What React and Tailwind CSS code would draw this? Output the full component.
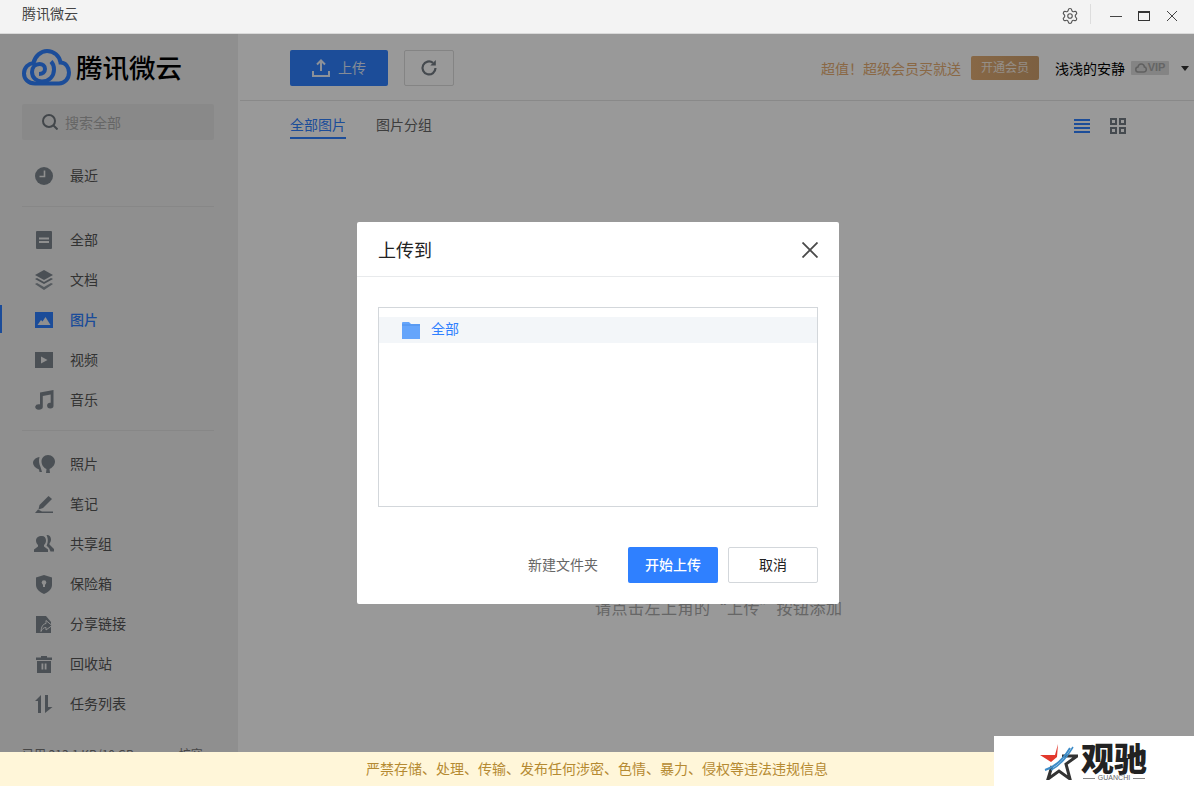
import { Settings } from "lucide-react";

const FONT = "font-['Noto_Sans_CJK_SC','Noto_Sans',sans-serif]";

const icons = {
  clock: <svg width="18" height="18" viewBox="0 0 18 18"><circle cx="9" cy="9" r="9" fill="currentColor"/><path d="M9.500 3.500v6H4.500" stroke="#eee" strokeWidth="1.600" fill="none"/></svg>,
  doc: <svg width="16" height="18" viewBox="0 0 16 18"><rect width="16" height="18" rx="1" fill="currentColor"/><path d="M3 6.500h10v2H3zM3 10h10v2H3z" fill="#eee"/></svg>,
  layers: <svg width="18" height="20" viewBox="0 0 18 20"><path d="M9 0l9 5-9 5-9-5z" fill="currentColor"/><path d="M0 9l2-1 7 4 7-4 2 1-9 5z" fill="currentColor"/><path d="M0 14l2-1 7 4 7-4 2 1-9 6z" fill="currentColor" opacity=".85"/></svg>,
  image: <svg width="18" height="16" viewBox="0 0 18 16"><rect width="18" height="16" fill="currentColor"/><path d="M2.500 13l3.500-5 1.500 1.500L10.500 5l5 8z" fill="#eee"/></svg>,
  video: <svg width="18" height="16" viewBox="0 0 18 16"><rect width="18" height="16" fill="currentColor"/><path d="M6 4.500L12.500 8 6 11.500z" fill="#eee"/></svg>,
  music: <svg width="19" height="20" viewBox="0 0 19 20"><path d="M5 2.500L18.500 0v15.500a3.200 2.800 0 1 1-2.800-2.700V4.500L7.800 6v11a3.800 2.800 0 1 1-2.800-2.700z" fill="currentColor"/></svg>,
  balloon: <svg width="22" height="18" viewBox="0 0 22 18"><path d="M15 0c4 0 7 3 7 6.500 0 3.500-3 6.500-5.500 7.500l.5 4h-4l.5-4C11 13 8.500 10 8.500 6.500 8.500 3 11 0 15 0z" fill="currentColor"/><path d="M6.500 2C3 2.500 0 5 0 8c0 2.500 2.500 5 6 6.500l.5 2.500H9l-1.500-5C6 9 5.500 5 6.500 2z" fill="currentColor"/></svg>,
  pen: <svg width="18" height="17" viewBox="0 0 18 17"><path d="M13.500 0l3.500 3L8 12 3.500 13.500 4.500 9z" fill="currentColor"/><path d="M3 13.500l-3 3.500h18v-1.500H7z" fill="currentColor"/></svg>,
  users: <svg width="20" height="18" viewBox="0 0 20 18"><path d="M8 1c2.500 0 4 2 4 4.500 0 2-1 3.500-2 4.500v1.500l4 3v2.500H0v-2.500l4-3V10C3 9 2 7.500 2 5.500 2 3 4 1 8 1z" fill="currentColor"/><path d="M13 0c2.500 0 4 2 4 4.500 0 2-1 3-1.500 4v1L20 14v2.500h-3.500L15 13l-2.500-2.500c1.500-2 2-6.500 0-10.500z" fill="currentColor"/></svg>,
  shield: <svg width="16" height="19" viewBox="0 0 16 19"><path d="M8 0l8 2.500V10c0 4-4 7.500-8 9-4-1.500-8-5-8-9V2.500z" fill="currentColor"/><circle cx="8" cy="7.500" r="2.300" fill="#eee"/><path d="M7 8h2v4H7z" fill="#eee"/></svg>,
  share: <svg width="16" height="17" viewBox="0 0 16 17"><path d="M0 0h10l5 6v11H0z" fill="currentColor"/><path d="M10 6.500V4.500l6 5-6 4.500v-2.500c-2.500 0-4 1.500-5 4 .3-5 2-7.500 5-8z" fill="currentColor" stroke="#eee" strokeWidth="1"/></svg>,
  trash: <svg width="16" height="17" viewBox="0 0 16 17"><path d="M5 0h6v1.500h5V4H0V1.500h5z" fill="currentColor"/><path d="M1 5h14v12H1z" fill="currentColor"/><path d="M5.500 7.500h1.800v6H5.500zM8.700 7.500h1.800v6H8.700z" fill="#eee"/></svg>,
  transfer: <svg width="18" height="18" viewBox="0 0 18 18"><path d="M6 0L0 6h3v12h3zM10 0h3v12h4.500L10 18z" fill="currentColor"/></svg>,
};

const groups = [
  [["clock", "最近"]],
  [["doc", "全部"], ["layers", "文档"], ["image", "图片", true], ["video", "视频"], ["music", "音乐"]],
  [["balloon", "照片"], ["pen", "笔记"], ["users", "共享组"], ["shield", "保险箱"], ["share", "分享链接"], ["trash", "回收站"], ["transfer", "任务列表"]],
];

function Row({ icon, label, active }) {
  return (
    <div className="relative flex h-10 items-center">
      {active && <div className="absolute left-0 top-[5px] h-[28px] w-[2px] bg-[#2d7fff]" />}
      <div className={`flex w-[70px] justify-center pl-[18px] ${active ? "text-[#2d7fff]" : "text-[#7d868e]"}`}>
        {icons[icon]}
      </div>
      <span className={`pb-[2px] text-sm ${active ? "font-medium text-[#2d7fff]" : "text-[#555]"}`}>{label}</span>
    </div>
  );
}

function Sidebar() {
  return (
    <aside className="flex h-full w-[238px] shrink-0 flex-col bg-[#eeeeee]">
      <div className="flex h-[70px] items-center pl-[22px]">
        <svg width="49" height="37" viewBox="0 0 49 37" fill="none" stroke="#2f80ff" strokeWidth="4" className="mb-[4px]">
          <path d="M13 34.500C6 34.500 2 30 2 24.500c0-6 4.500-10 9.500-10.500C13 7 19 2 25 2c7 0 12.500 5 13.500 11.500 5 0 8.500 4.500 8.500 10 0 6.500-4.500 11-10 11z" />
          <path d="M17 25c3.500 0 6-2 6-5 0-3-2.500-5-5.500-5C13 15 10 18.500 10 23c0 6 5 9.500 10 9.500 7 0 12-5 12-12 0-3-1-6-3-8" />
        </svg>
        <span className="mb-[4px] ml-[5px] text-[26.500px] font-medium leading-none text-black">腾讯微云</span>
      </div>
      <div className="ml-[22px] mr-[24px] flex h-9 items-center rounded-[2px] bg-[#e5e5e5] pl-5 text-sm text-[#aaa]">
        <svg width="16" height="16" viewBox="0 0 16 16" fill="none" stroke="#6f767c" strokeWidth="2" className="mr-[7px]">
          <circle cx="7" cy="7" r="6" /><path d="M11.500 11.500L15.500 15.500" />
        </svg>
        <span>搜索全部</span>
      </div>
      <div className="mt-4">
        {groups.map((g, i) => (
          <div key={i} className={i ? "mt-[4px]" : ""}>
            {i > 0 && <div className="ml-[22px] mr-[24px] mb-[13px] mt-[10px] h-px bg-[#e2e2e2]" />}
            {g.map(([icon, label, active]) => <Row key={label} icon={icon} label={label} active={active} />)}
          </div>
        ))}
      </div>
      <div className="ml-[22px] mr-[26px] mt-[22px] flex justify-between text-xs text-[#777]">
        <span>已用 213.1 KB/10 GB</span><span>扩容 &gt;</span>
      </div>
    </aside>
  );
}

function Main() {
  return (
    <main className="flex min-w-0 flex-1 flex-col bg-white">
      <div className="ml-[2px] flex h-[67px] shrink-0 items-center border-b border-[#e4e4e4] pl-[50px] pr-[5px] pt-[1px]">
        <button className="flex h-9 w-[98px] items-center justify-center gap-[8px] rounded-[2px] bg-[#2f80ff] text-sm text-[#dfe9fa]">
          <svg width="18" height="18" viewBox="0 0 18 18" fill="none" stroke="#eaf2ff" strokeWidth="2">
            <path d="M9 12V2M5 5.500L9 1.500l4 4" /><path d="M1 12v5h16v-5" />
          </svg>
          <span className="pb-[2px]">上传</span>
        </button>
        <button className="ml-4 flex h-9 w-[50px] items-center justify-center rounded-[2px] border border-[#dcdcdc] bg-white">
          <svg width="18" height="18" viewBox="0 0 18 18" fill="none" stroke="#747c84" strokeWidth="2.200">
            <path d="M15.500 9A6.500 6.500 0 1 1 13 3.800" /><path d="M15.800 1v5.500h-5.500z" fill="#747c84" stroke="none" />
          </svg>
        </button>
        <div className="ml-auto flex items-center">
          <span className="mt-[1px] text-sm text-[#e6ae73]">超值！超级会员买就送</span>
          <span className="ml-[10px] flex h-6 w-[68px] items-center justify-center rounded-[2px] bg-gradient-to-r from-[#e2ad75] to-[#cfa06d] pb-[1px] text-xs text-white/80">开通会员</span>
          <span className="ml-[16px] text-sm text-black">浅浅的安静</span>
          <span className="ml-[6px] flex h-[14px] w-[38px] items-center justify-center gap-px rounded-[1px] bg-[#dcdcdc] font-['Liberation_Sans',sans-serif] text-[11px] font-bold text-[#a8a8a8]">
            <svg width="12" height="10" viewBox="0 0 12 10" fill="none" stroke="#a0a0a0" strokeWidth="1.500"><path d="M3 9C1.500 9 .8 8 .8 6.500S2 4 3 4c.3-1.800 1.600-3 3.200-3 1.800 0 3 1.300 3.200 3 1.200 0 1.900 1 1.900 2.500S10.500 9 9 9z" /></svg>
            VIP
          </span>
          <span className="ml-[12px] mt-[1px] h-0 w-0 border-x-[4px] border-t-[5px] border-x-transparent border-t-[#333]" />
        </div>
      </div>
      <div className="flex h-[50px] shrink-0 items-start pl-[52px] pr-[68px] text-sm">
        <div className="mt-[13px] flex h-[25px] w-14 justify-center border-b-2 border-[#2f80ff] leading-5 text-[#2f80ff]">全部图片</div>
        <div className="ml-[30px] mt-[13px] leading-5 text-[#666]">图片分组</div>
        <svg width="16" height="14" viewBox="0 0 16 14" fill="#2f80ff" className="ml-auto mt-[18px]">
          <path d="M0 0h16v2H0zM0 4h16v2H0zM0 8h16v2H0zM0 12h16v2H0z" />
        </svg>
        <svg width="16" height="16" viewBox="0 0 16 16" fill="none" stroke="#747c84" strokeWidth="2" className="ml-5 mt-[17px]">
          <path d="M1 1h5v5H1zM10 1h5v5h-5zM1 10h5v5H1zM10 10h5v5h-5z" />
        </svg>
      </div>
      <p className="ml-[357px] mt-[444px] whitespace-nowrap text-base leading-6 tracking-[0.5px] text-[#aaa]">请点击左上角的“上传”按钮添加</p>
    </main>
  );
}

function Dialog() {
  return (
    <div className="absolute left-[357px] top-[188px] flex h-[382px] w-[482px] flex-col rounded-[2px] bg-white">
      <div className="flex h-[55px] shrink-0 items-center justify-between border-b border-[#e8eaec] px-[21px]">
        <span className="text-lg text-[#222]">上传到</span>
        <svg width="16" height="16" viewBox="0 0 16 16" stroke="#4a4a4a" strokeWidth="1.800" fill="none" className="mt-[1px]"><path d="M.5.500l15 15M15.500.500l-15 15" /></svg>
      </div>
      <div className="mx-[21px] mt-[30px] h-[200px] border border-[#d3d7db] pt-[9px]">
        <div className="flex h-[26px] items-center bg-[#f3f6f9] pl-[23px] text-sm text-[#2f80ff]">
          <svg width="18" height="17" viewBox="0 0 18 17"><path d="M0 1a1 1 0 0 1 1-1h6l2 2h9v15H0z" fill="#65a5fb" /><path d="M0 3h18" stroke="#4f90ea" strokeWidth="1" /></svg>
          <span className="ml-[11px] pb-[4px]">全部</span>
        </div>
      </div>
      <div className="mr-[21px] mt-[40px] flex items-center justify-end text-sm">
        <span className="mr-[30px] pb-[2px] text-[#666]">新建文件夹</span>
        <button className="h-9 w-[90px] rounded-[2px] bg-[#2f80ff] pb-[2px] font-medium text-white">开始上传</button>
        <button className="ml-[10px] h-9 w-[90px] rounded-[2px] border border-[#d3d7db] bg-white pb-[2px] text-[#222]">取消</button>
      </div>
    </div>
  );
}

function Watermark() {
  return (
    <div className="absolute bottom-0 right-0 flex h-[50px] w-[200px] items-start bg-white pl-[46px] pt-[4px]">
      <svg width="38" height="37" viewBox="0 0 38 37" className="mt-[3px]">
        <path d="M18 1l-3 11H0l11 7 6-5z" fill="#e2382c" />
        <path d="M22 13h15l-11 8 4 15-11-8-11 8 4-13" fill="none" stroke="#333" strokeWidth="3" />
        <path d="M5 27C15 24 24 15 30 5" fill="none" stroke="#3d8cc8" strokeWidth="2" />
        <path d="M11 27C19 23 27 14 33 4" fill="none" stroke="#3d8cc8" strokeWidth="1.500" />
      </svg>
      <div className="ml-[3px] flex flex-col items-center">
        <span className="text-[33px] font-black leading-[34px] text-[#222]">观驰</span>
        <div className="flex items-center gap-[3px] font-['Liberation_Sans',sans-serif] text-[7px] leading-[8px] text-[#666]">
          <span className="h-px w-3 bg-[#888]" />GUANCHI<span className="h-px w-3 bg-[#888]" />
        </div>
      </div>
    </div>
  );
}

export default function App() {
  return (
    <div className={`relative flex h-[786px] w-[1194px] flex-col overflow-hidden bg-white ${FONT}`}>
      <header className="flex h-[34px] shrink-0 items-center border-b border-[#d9d9d9] bg-[#f3f3f3] pb-[1px] pl-[22px] text-sm text-[#444]">
        <span className="pb-[6px]">腾讯微云</span>
        <div className="ml-auto flex items-center">
          <Settings size={18} strokeWidth={1.500} color="#555" />
          <span className="mb-[5px] ml-[11px] h-5 w-px bg-[#ddd]" />
          <span className="ml-[19px] h-px w-3 bg-[#444]" />
          <span className="ml-[16px] box-border h-[10px] w-3 border border-t-2 border-[#333]" />
          <svg width="10" height="10" viewBox="0 0 10 10" stroke="#444" fill="none" className="mx-[17px]"><path d="M0 0l10 10M10 0L0 10" /></svg>
        </div>
      </header>
      <div className="flex min-h-0 flex-1">
        <Sidebar />
        <Main />
      </div>
      <div className="absolute inset-x-0 bottom-0 top-[34px] bg-black/40">
        <Dialog />
      </div>
      <div className="absolute bottom-0 left-0 right-0 flex h-[34px] items-center justify-center bg-[#fff6d9] pb-[2px] text-sm text-[#b58a32]">
        严禁存储、处理、传输、发布任何涉密、色情、暴力、侵权等违法违规信息
      </div>
      <Watermark />
    </div>
  );
}
